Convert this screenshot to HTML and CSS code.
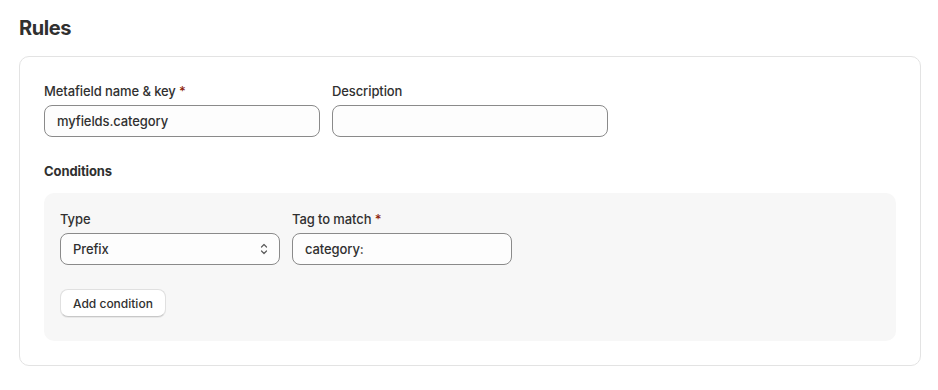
FILE: index.html
```html
<!DOCTYPE html>
<html lang="en">
<head>
<meta charset="utf-8">
<title>Rules</title>
<link rel="stylesheet" href="styles.css">
</head>
<body>
<div class="page">
  <h2 class="title">Rules</h2>
  <div class="card">
    <div class="row">
      <div class="field wide">
        <label class="label">Metafield name &amp; key <span class="req">*</span></label>
        <div class="input">myfields.category</div>
      </div>
      <div class="field wide">
        <label class="label">Description</label>
        <div class="input"></div>
      </div>
    </div>
    <h3 class="subtitle">Conditions</h3>
    <div class="conditions">
      <div class="row">
        <div class="field narrow">
          <label class="label">Type</label>
          <div class="input select">
            <span>Prefix</span>
            <svg class="chev" width="10" height="14" viewBox="0 0 10 14" fill="none" stroke="#5c5c5c" stroke-width="1.2" stroke-linecap="round" stroke-linejoin="round">
              <path d="M2.5 5 L5 2.5 L7.5 5"/>
              <path d="M2.5 9 L5 11.5 L7.5 9"/>
            </svg>
          </div>
        </div>
        <div class="field narrow">
          <label class="label">Tag to match <span class="req">*</span></label>
          <div class="input">category:</div>
        </div>
      </div>
      <button class="btn">Add condition</button>
    </div>
  </div>
</div>
</body>
</html>
```

FILE: styles.css
```css
* { box-sizing: border-box; }
html, body { margin: 0; padding: 0; background: #ffffff; }
body {
  font-family: Inter, "Noto Sans", sans-serif;
  color: #303030;
  font-size: 13px;
  line-height: 20px;
}
.page {
  padding: 14px 17px 0 19px;
}
.title {
  margin: 0;
  font-size: 20px;
  line-height: 28px;
  font-weight: 700;
  color: #303030;
  letter-spacing: -0.4px;
}
.card {
  margin-top: 14px;
  border: 1px solid #e3e3e3;
  border-radius: 10px;
  padding: 24px;
  background: #fff;
}
.row {
  display: flex;
  gap: 12px;
}
.field {
  display: flex;
  flex-direction: column;
  gap: 4px;
}
.field.wide { width: 276px; }
.field.narrow { width: 220px; }
.label {
  font-size: 13px;
  line-height: 20px;
  font-weight: 450;
  color: #303030;
  letter-spacing: -0.1px;
}
.req { color: #8e1f0b; }
.input {
  height: 32px;
  border: 1px solid #8a8a8a;
  border-radius: 8px;
  background: #fdfdfd;
  padding: 0 12px;
  display: flex;
  align-items: center;
  font-size: 13px;
  font-weight: 450;
  color: #303030;
  letter-spacing: -0.1px;
}
.select {
  justify-content: space-between;
  background: #fdfdfd;
  padding-right: 10px;
}
.chev { display: block; }
.subtitle {
  margin: 24px 0 12px;
  font-size: 13px;
  line-height: 20px;
  font-weight: 650;
  color: #303030;
  letter-spacing: -0.1px;
}
.conditions {
  background: #f7f7f7;
  border-radius: 10px;
  padding: 16px 16px 24px;
}
.btn {
  display: block;
  margin-top: 24px;
  height: 28px;
  padding: 0 12px;
  background: #ffffff;
  border: 1px solid #e0e0e0;
  border-bottom-color: #c8c8c8;
  border-radius: 8px;
  box-shadow: 0 1px 0 rgba(0,0,0,0.06);
  font-family: Inter, "Noto Sans", sans-serif;
  font-size: 12px;
  font-weight: 550;
  color: #303030;
  cursor: pointer;
}
```
